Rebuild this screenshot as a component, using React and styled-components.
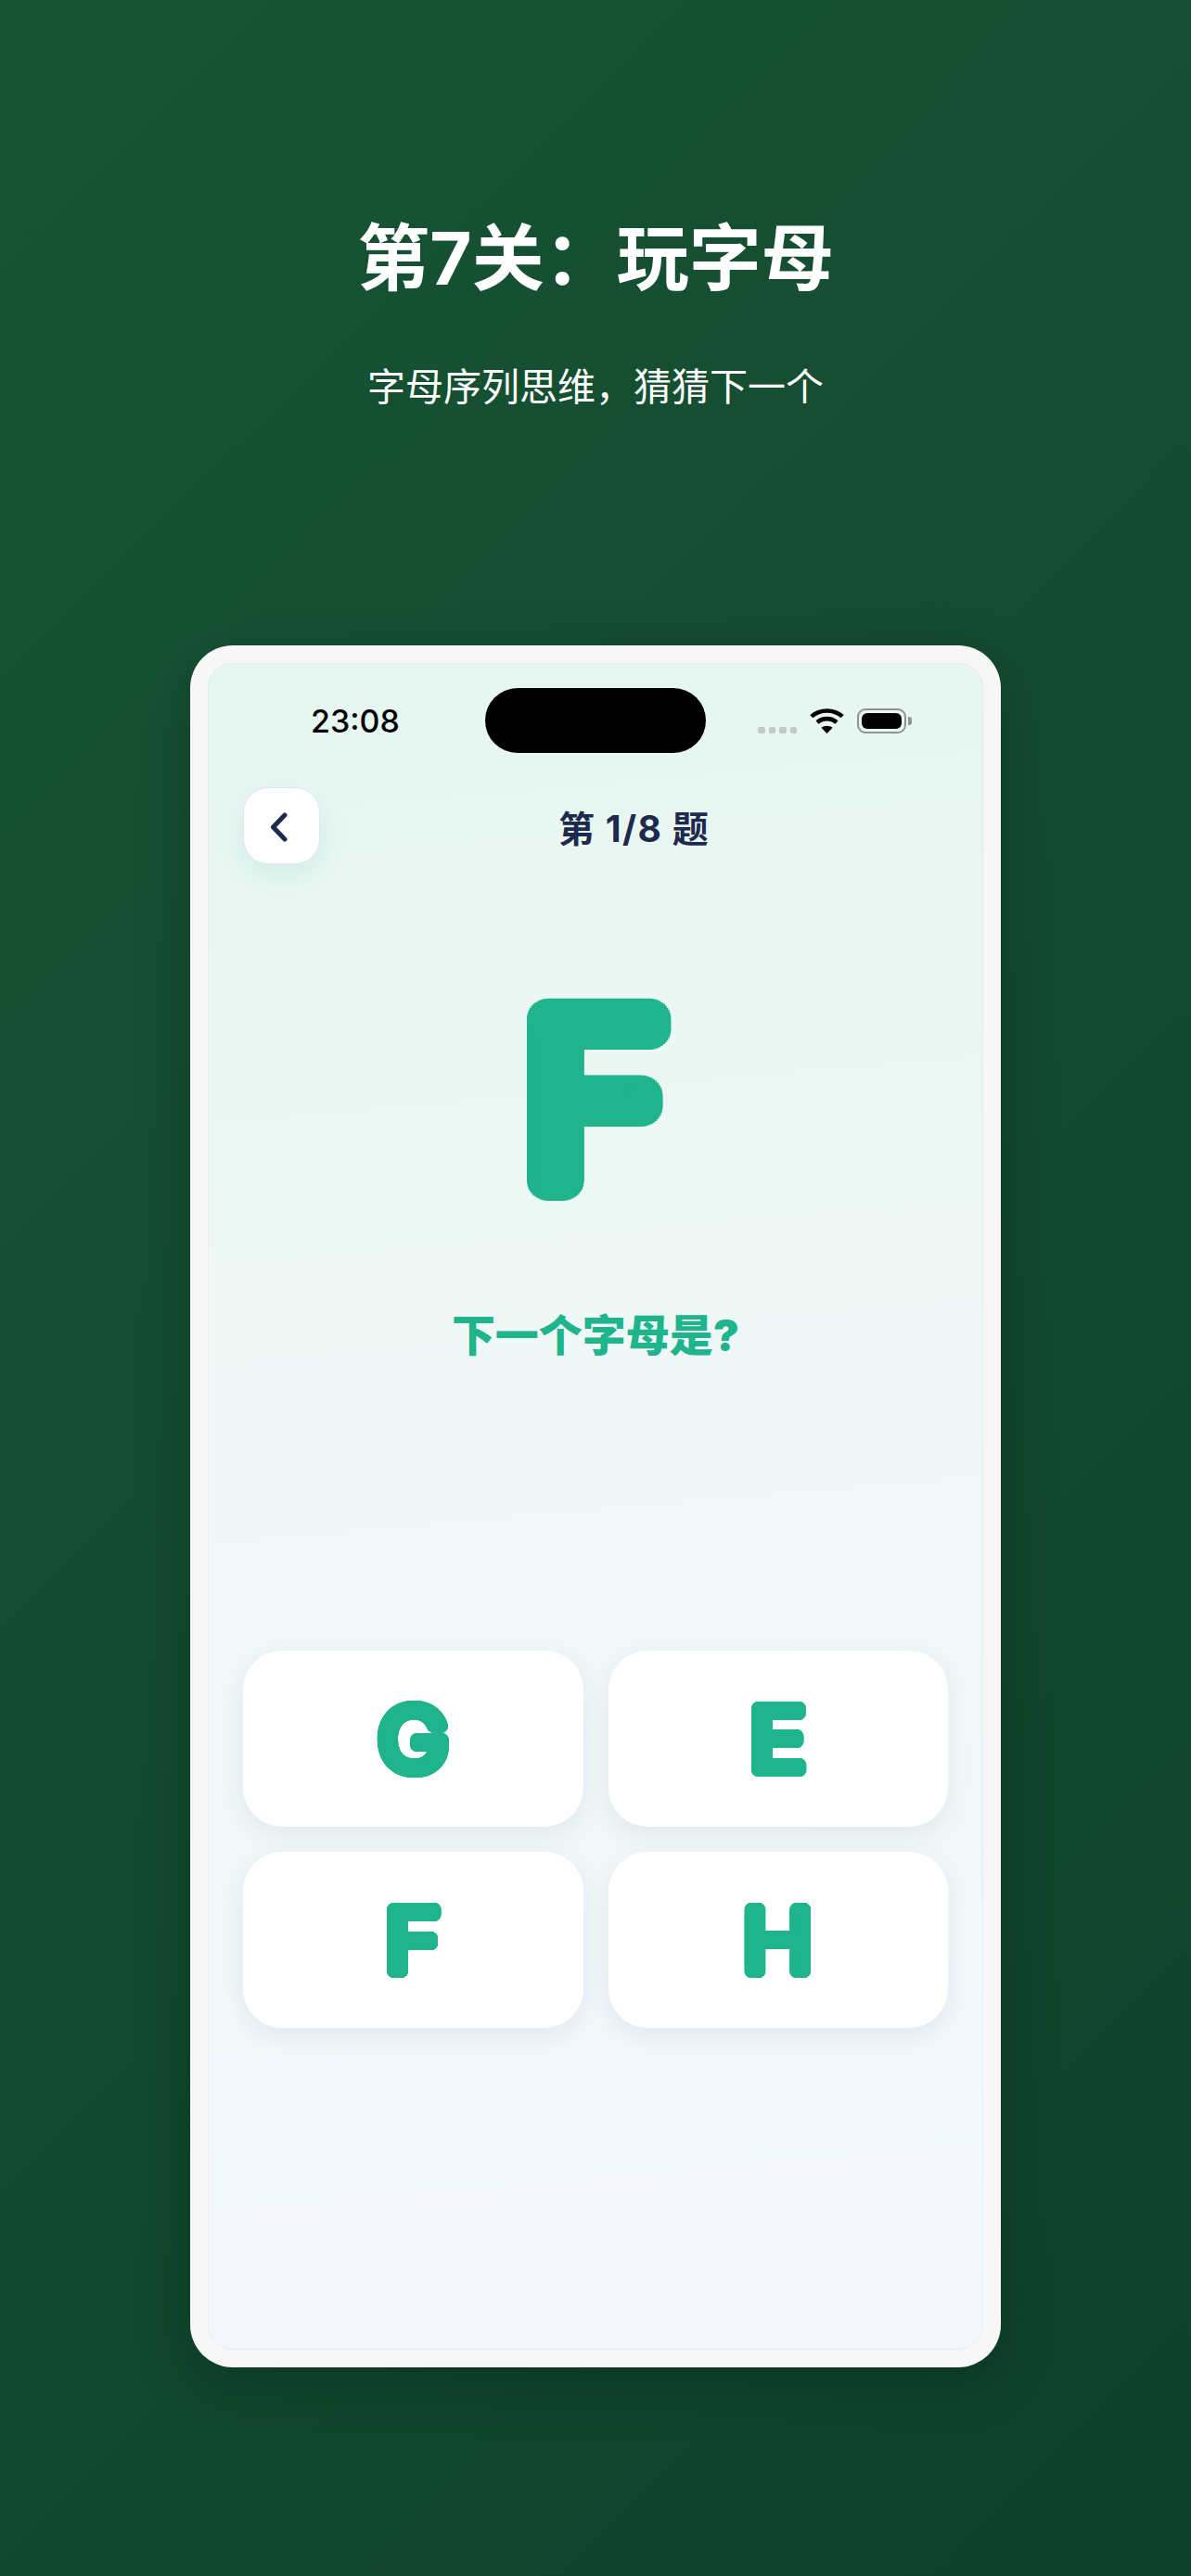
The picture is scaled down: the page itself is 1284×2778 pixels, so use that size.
import React from "react";
import styled, { createGlobalStyle } from "styled-components";

const GlobalStyle = createGlobalStyle`
  html, body {
    margin: 0;
    padding: 0;
    background: #134a30;
  }
  * {
    box-sizing: border-box;
  }
`;

const cjk = `Inter, "Noto Sans CJK SC", sans-serif`;
const green = "#20b48d";
const navy = "#1e2a4d";

// the rounded letter face: thin glyph grown outward by rings of hard shadows
const ring = (radius, steps, color) =>
  Array.from({ length: steps }, (_, i) => {
    const a = (i / steps) * Math.PI * 2;
    return `${(Math.cos(a) * radius).toFixed(2)}px ${(Math.sin(a) * radius).toFixed(2)}px 0 ${color}`;
  }).join(", ");

const rounded = (radius, color) =>
  [ring(radius, 48, color), ring(radius * 0.66, 32, color), ring(radius * 0.33, 16, color)].join(", ");

const Page = styled.div`
  width: 1284px;
  height: 2778px;
  overflow: hidden;
  display: flex;
  flex-direction: column;
  align-items: center;
  background: linear-gradient(135deg, #185434 0%, #0e412c 100%);
  font-family: ${cjk};
`;

const Title = styled.h1`
  margin: 231px 0 0;
  font-size: 78px;
  line-height: 96px;
  font-weight: 700;
  color: #fff;
`;

const Subtitle = styled.p`
  margin: 60px 0 0;
  font-size: 41px;
  line-height: 60px;
  font-weight: 400;
  color: #fff;
`;

const Phone = styled.div`
  margin-top: 249px;
  width: 874px;
  height: 1857px;
  padding: 19px;
  border-radius: 46px;
  background: #f7f7f7;
  box-shadow: 0 16px 60px rgba(0, 0, 0, 0.22);
`;

const Screen = styled.div`
  height: 100%;
  padding-top: 26px;
  border-radius: 27px;
  border: 1px solid rgba(0, 0, 0, 0.04);
  background: linear-gradient(175deg, #e6f6f1 0%, #eff8f6 40%, #f3f7fd 100%);
`;

const StatusBar = styled.div`
  display: grid;
  grid-template-columns: 1fr 238px 1fr;
  align-items: center;
  height: 70px;
`;

const Time = styled.div`
  padding-left: 110px;
  font-size: 34px;
  font-weight: 550;
  color: #000;
`;

const Island = styled.div`
  height: 70px;
  border-radius: 35px;
  background: #000;
`;

const StatusIcons = styled.div`
  display: flex;
  justify-content: flex-end;
  align-items: flex-end;
  padding-right: 82px;
  height: 27px;
`;

const Dots = styled.div`
  display: flex;
  gap: 4px;
  margin-right: 14px;
`;

const Dot = styled.span`
  width: 7.5px;
  height: 7px;
  border-radius: 2px;
  background: #c4c9c8;
`;

const Battery = styled.div`
  position: relative;
  margin-left: 14px;
  width: 53px;
  height: 27px;
  padding: 3px;
  border: 2px solid #8f9392;
  border-radius: 9px;
  &::after {
    content: "";
    position: absolute;
    right: -8px;
    top: 7px;
    width: 4px;
    height: 9px;
    border-radius: 0 3px 3px 0;
    background: #8f9392;
  }
`;

const BatteryFill = styled.div`
  height: 100%;
  border-radius: 6px;
  background: #000;
`;

const Content = styled.div`
  padding: 0 37px;
`;

const Header = styled.div`
  display: flex;
  align-items: center;
  margin-top: 37px;
`;

const BackButton = styled.button`
  width: 83px;
  height: 83px;
  padding: 3px 5px 0 0;
  display: flex;
  align-items: center;
  justify-content: center;
  border: 1.5px solid #e0e6f7;
  border-radius: 27px;
  background: #fff;
  box-shadow: 0 10px 28px rgba(32, 180, 141, 0.12);
`;

const HeaderTitle = styled.div`
  flex: 1;
  text-align: center;
  font-size: 39px;
  letter-spacing: 1.3px;
  font-weight: 700;
  color: ${navy};
`;

const Hero = styled.div`
  margin-top: 145px;
  height: 218px;
  display: flex;
  align-items: center;
  justify-content: center;
`;

const Letter = styled.span`
  display: inline-block;
  font-family: Inter, sans-serif;
  font-weight: ${(p) => p.$weight};
  font-size: ${(p) => p.$size}px;
  line-height: 1;
  color: ${green};
  text-shadow: ${(p) => rounded(p.$radius, green)};
  transform: scaleX(1.08);
`;

const Question = styled.div`
  margin-top: 122px;
  text-align: center;
  font-size: 47px;
  line-height: 46px;
  font-weight: 900;
  color: ${green};
`;

const Options = styled.div`
  margin-top: 317px;
  display: grid;
  grid-template-columns: 1fr 1fr;
  gap: 27px;
`;

const Option = styled.button`
  height: 190px;
  padding: 0;
  display: flex;
  align-items: center;
  justify-content: center;
  border: none;
  border-radius: 42px;
  background: #fff;
  box-shadow: 0 8px 26px rgba(30, 60, 90, 0.08);
`;

const WifiIcon = () => (
  <svg width="37" height="27" viewBox="0 0 37 27" fill="none" stroke="#000" strokeWidth="4.6">
    <path d="M1.8 8.6C11 0.4 26 0.4 35.2 8.6" />
    <path d="M8 15C14 9.8 23 9.8 29 15" />
    <path d="M18.5 27L12.4 20.8C15.6 18 21.4 18 24.6 20.8Z" fill="#000" stroke="none" />
  </svg>
);

const BackIcon = () => (
  <svg width="20" height="32" viewBox="0 0 20 32" fill="none" stroke={navy} strokeWidth="5" strokeLinecap="round" strokeLinejoin="round">
    <path d="M16 3L3.5 16L16 29" />
  </svg>
);

const options = ["G", "E", "F", "H"];

export default function App() {
  return (
    <Page>
      <GlobalStyle />
      <Title>第7关：玩字母</Title>
      <Subtitle>字母序列思维，猜猜下一个</Subtitle>
      <Phone>
        <Screen>
          <StatusBar>
            <Time>23:08</Time>
            <Island />
            <StatusIcons>
              <Dots>
                <Dot />
                <Dot />
                <Dot />
                <Dot />
              </Dots>
              <WifiIcon />
              <Battery>
                <BatteryFill />
              </Battery>
            </StatusIcons>
          </StatusBar>
          <Content>
            <Header>
              <BackButton>
                <BackIcon />
              </BackButton>
              <HeaderTitle>第 1/8 题</HeaderTitle>
            </Header>
            <Hero>
              <Letter $size={245} $radius={20} $weight={260}>F</Letter>
            </Hero>
            <Question>下一个字母是?</Question>
            <Options>
              {options.map((o) => (
                <Option key={o}>
                  <Letter $size={95} $radius={6} $weight={420}>{o}</Letter>
                </Option>
              ))}
            </Options>
          </Content>
        </Screen>
      </Phone>
    </Page>
  );
}
